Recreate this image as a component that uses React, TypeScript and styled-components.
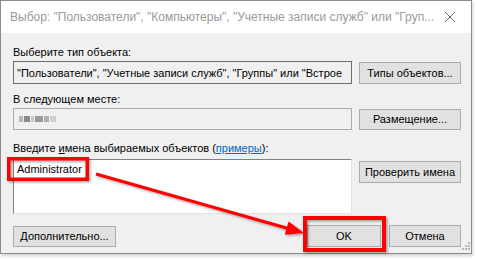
import React from "react";
import styled, { createGlobalStyle } from "styled-components";

const Global = createGlobalStyle`
  html, body { margin: 0; padding: 0; background: #ffffff; }
  body { font-family: "Liberation Sans", Arial, sans-serif; font-size: 11px; color: #000; }
  * { box-sizing: border-box; }
`;

const Stage = styled.div`
  position: relative;
  width: 477px;
  height: 260px;
`;

const Window = styled.div`
  width: 472px;
  height: 254px;
  border: 1px solid #8c8c8c;
  display: flex;
  flex-direction: column;
  box-shadow: 1px 2px 3px rgba(0, 0, 0, 0.18);
  background: #f0f0f0;
`;

const TitleBar = styled.div`
  height: 32px;
  background: #ffffff;
  display: flex;
  align-items: center;
  padding-left: 9px;
  padding-right: 6px;
  flex: none;
`;

const Title = styled.div`
  flex: 1;
  color: #9a9a9a;
  font-size: 12px;
  white-space: nowrap;
  overflow: hidden;
`;

const Close = styled.div`
  width: 30px;
  height: 20px;
  display: flex;
  align-items: center;
  justify-content: center;
`;

const Body = styled.div`
  flex: 1;
  display: flex;
  flex-direction: column;
  padding: 12px 9px 0 12px;
`;

const Label = styled.div<{ $mt?: number; $mb?: number }>`
  height: 15px;
  line-height: 15px;
  margin-top: ${(p) => p.$mt ?? 0}px;
  margin-bottom: ${(p) => p.$mb ?? 1}px;
  white-space: nowrap;
`;

const Row = styled.div<{ $align?: string }>`
  display: flex;
  gap: 7px;
  align-items: ${(p) => p.$align ?? "center"};
`;

const Field = styled.div<{ $dark?: boolean; $h: number }>`
  width: 339px;
  height: ${(p) => p.$h}px;
  border: 1px solid ${(p) => (p.$dark ? "#6e6e6e" : "#acacac")};
  background: #f0f0f0;
  padding-left: 3px;
  display: flex;
  align-items: center;
  white-space: nowrap;
  overflow: hidden;
  flex: none;
`;

const TextArea = styled.div`
  width: 339px;
  height: 55px;
  background: #ffffff;
  border-style: solid;
  border-width: 1px;
  border-color: #828282 #e3e3e3 #e3e3e3 #828282;
  padding: 3px 0 0 3px;
  flex: none;
`;

const Button = styled.div<{ $w: number; $h?: number; $mt?: number }>`
  width: ${(p) => p.$w}px;
  height: ${(p) => p.$h ?? 22}px;
  margin-top: ${(p) => p.$mt ?? 0}px;
  background: #e1e1e1;
  border: 1px solid #adadad;
  display: flex;
  align-items: center;
  justify-content: center;
  white-space: nowrap;
  flex: none;
`;

const Link = styled.span`
  color: #0066cc;
  text-decoration: underline;
`;

const Access = styled.span`
  text-decoration: underline;
`;

const Blur = styled.span`
  display: inline-flex;
  gap: 1px;
  margin-left: 2px;
  filter: blur(0.6px);
`;

const Dot = styled.span<{ $c: string; $w: number }>`
  display: inline-block;
  width: ${(p) => p.$w}px;
  height: 6px;
  background: ${(p) => p.$c};
`;

const BottomRow = styled.div`
  display: flex;
  align-items: center;
  margin-top: 11px;
`;

const Spacer = styled.div`
  flex: 1;
`;

const Grip = styled.div`
  position: absolute;
  right: 7px;
  bottom: 8px;
`;

const Overlay = styled.svg`
  position: absolute;
  left: 0;
  top: 0;
  pointer-events: none;
`;

export default function App() {
  return (
    <>
      <Global />
      <Stage>
        <Window>
          <TitleBar>
            <Title>
              Выбор: "Пользователи", "Компьютеры", "Учетные записи служб" или "Груп...
            </Title>
            <Close>
              <svg width="12" height="12" viewBox="0 0 12 12">
                <path d="M1 1 L11 11 M11 1 L1 11" stroke="#666" strokeWidth="1" />
              </svg>
            </Close>
          </TitleBar>
          <Body>
            <Label>Выберите тип объекта:</Label>
            <Row>
              <Field $dark $h={23}>
                "Пользователи", "Учетные записи служб", "Группы" или "Встрое
              </Field>
              <Button $w={102}>Типы объектов...</Button>
            </Row>
            <Label $mt={8}>В следующем месте:</Label>
            <Row>
              <Field $h={22}>
                <Blur>
                  <Dot $c="#b8b8b8" $w={4} />
                  <Dot $c="#8a8a8a" $w={6} />
                  <Dot $c="#c8c8c8" $w={3} />
                  <Dot $c="#9a9a9a" $w={8} />
                  <Dot $c="#b0b0b0" $w={5} />
                  <Dot $c="#d0d0d0" $w={6} />
                </Blur>
              </Field>
              <Button $w={102} $h={21}>Размещение...</Button>
            </Row>
            <Label $mt={11} $mb={3}>
              Введите <Access>и</Access>мена выбираемых объектов (<Link>примеры</Link>):
            </Label>
            <Row $align="flex-start">
              <TextArea>Administrator</TextArea>
              <Button $w={102} $mt={2}>Проверить имена</Button>
            </Row>
            <BottomRow>
              <Button $w={103} $h={21}>Дополнительно...</Button>
              <Spacer />
              <Button $w={74}>OK</Button>
              <Button $w={72} style={{ marginLeft: 8, marginRight: 1 }}>Отмена</Button>
            </BottomRow>
          </Body>
        </Window>
        <Grip>
          <svg width="8" height="8" viewBox="0 0 8 8">
            <rect x="6" y="0" width="2" height="2" fill="#b5b5b5" />
            <rect x="3" y="3" width="2" height="2" fill="#b5b5b5" />
            <rect x="6" y="3" width="2" height="2" fill="#b5b5b5" />
            <rect x="0" y="6" width="2" height="2" fill="#b5b5b5" />
            <rect x="3" y="6" width="2" height="2" fill="#b5b5b5" />
            <rect x="6" y="6" width="2" height="2" fill="#b5b5b5" />
          </svg>
        </Grip>
        <Overlay width="477" height="260" viewBox="0 0 477 260">
          <defs>
            <filter id="sh" x="-10%" y="-10%" width="130%" height="130%">
              <feDropShadow dx="1.5" dy="1.5" stdDeviation="1" floodColor="#000" floodOpacity="0.35" />
            </filter>
          </defs>
          <g filter="url(#sh)">
            <rect x="8.75" y="158.75" width="78.5" height="20.5" fill="none" stroke="#ff0000" strokeWidth="3.5" />
            <rect x="305" y="218" width="79" height="32" fill="none" stroke="#ff0000" strokeWidth="4" />
            <line x1="96" y1="174" x2="290" y2="229" stroke="#ff0000" strokeWidth="3" />
            <polygon points="304,233 284.8,234.8 288.6,221.4" fill="#ff0000" />
          </g>
        </Overlay>
      </Stage>
    </>
  );
}
